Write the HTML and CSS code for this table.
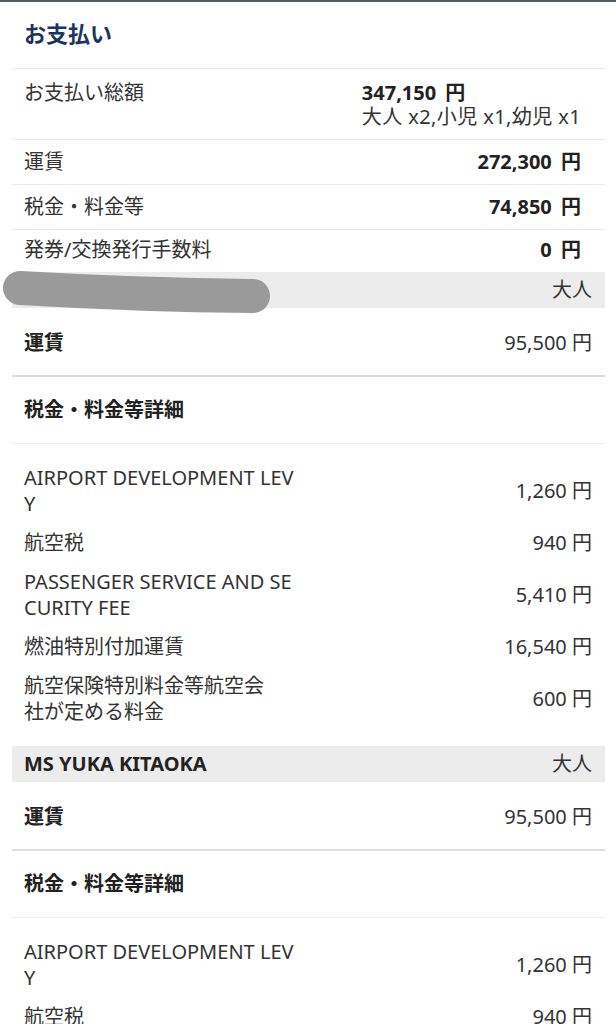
FILE: index.html
```html
<!DOCTYPE html>
<html lang="ja">
<head>
    <meta charset="UTF-8">
    <meta name="viewport" content="width=device-width, initial-scale=1.0">
    <title>お支払い</title>
    <link rel="stylesheet" href="styles.css">
</head>
<body>
    <div class="topbar"></div>
    <div class="page">
        <h2 class="title">お支払い</h2>

        <div class="summary">
            <div class="sum-row total">
                <span class="label">お支払い総額</span>
                <div class="value">
                    <div class="amount">347,150 <span class="yen">円</span></div>
                    <div class="pax-count">大人 x2,小児 x1,幼児 x1</div>
                </div>
            </div>
            <div class="sum-row">
                <span class="label">運賃</span>
                <span class="amount">272,300 <span class="yen">円</span></span>
            </div>
            <div class="sum-row">
                <span class="label">税金・料金等</span>
                <span class="amount">74,850 <span class="yen">円</span></span>
            </div>
            <div class="sum-row last">
                <span class="label">発券/交換発行手数料</span>
                <span class="amount">0 <span class="yen">円</span></span>
            </div>
        </div>

        <div class="passenger">
            <div class="pax-head">
                <span class="name"></span>
                <span class="type">大人</span>
                <!-- 名前は塗りつぶし -->
                <svg class="scribble" width="280" height="46" viewBox="0 0 280 46">
                    <path d="M20 18 Q140 25 253 26" stroke="#9a9a9a" stroke-width="34" stroke-linecap="round" fill="none"/>
                </svg>
            </div>
            <div class="fare-row">
                <span class="label">運賃</span>
                <span>95,500 円</span>
            </div>
            <div class="detail-head">税金・料金等詳細</div>
            <div class="tax-list">
                <div class="tax-item">
                    <span class="tax-name">AIRPORT DEVELOPMENT LEV<br>Y</span>
                    <span>1,260 円</span>
                </div>
                <div class="tax-item">
                    <span class="tax-name">航空税</span>
                    <span>940 円</span>
                </div>
                <div class="tax-item">
                    <span class="tax-name">PASSENGER SERVICE AND SE<br>CURITY FEE</span>
                    <span>5,410 円</span>
                </div>
                <div class="tax-item">
                    <span class="tax-name">燃油特別付加運賃</span>
                    <span>16,540 円</span>
                </div>
                <div class="tax-item">
                    <span class="tax-name">航空保険特別料金等航空会<br>社が定める料金</span>
                    <span>600 円</span>
                </div>
            </div>
        </div>

        <div class="passenger">
            <div class="pax-head">
                <span class="name">MS YUKA KITAOKA</span>
                <span class="type">大人</span>
            </div>
            <div class="fare-row">
                <span class="label">運賃</span>
                <span>95,500 円</span>
            </div>
            <div class="detail-head">税金・料金等詳細</div>
            <div class="tax-list">
                <div class="tax-item">
                    <span class="tax-name">AIRPORT DEVELOPMENT LEV<br>Y</span>
                    <span>1,260 円</span>
                </div>
                <div class="tax-item">
                    <span class="tax-name">航空税</span>
                    <span>940 円</span>
                </div>
                <div class="tax-item">
                    <span class="tax-name">PASSENGER SERVICE AND SE<br>CURITY FEE</span>
                    <span>5,410 円</span>
                </div>
            </div>
        </div>
    </div>
</body>
</html>
```

FILE: styles.css
```css
body {
    margin: 0;
    padding: 0;
    font-family: "Noto Sans", "Noto Sans CJK JP", sans-serif;
    font-size: 20px;
    color: #333;
    background: #fff;
}
.topbar {
    height: 2px;
    background-color: #4d5c66;
}
.page {
    padding: 0 11px 0 12px;
}
.title {
    margin: 0;
    padding: 17px 12px 21px;
    font-size: 22px;
    line-height: 28px;
    font-weight: bold;
    color: #1d3461;
    border-bottom: 1px solid #ebebeb;
}
.sum-row {
    display: flex;
    justify-content: space-between;
    align-items: flex-start;
    padding: 10px 24px 10px 12px;
    line-height: 24px;
    border-bottom: 1px solid #ebebeb;
}
.sum-row.total {
    padding-top: 12px;
}
.sum-row.last {
    padding-top: 8px;
    border-bottom: none;
}
.sum-row .value {
    text-align: left;
}
.sum-row .amount {
    font-weight: bold;
    color: #222;
}
.sum-row .yen {
    margin-left: 4px;
}
.pax-count {
    letter-spacing: 0.4px;
}
.pax-head {
    position: relative;
    display: flex;
    justify-content: space-between;
    height: 36px;
    line-height: 36px;
    padding: 0 13px 0 12px;
    background-color: #ececec;
}
.pax-head .name {
    font-weight: bold;
    color: #222;
}
.scribble {
    position: absolute;
    left: -12px;
    top: -2px;
}
.fare-row {
    display: flex;
    justify-content: space-between;
    padding: 23px 13px 20px 12px;
    line-height: 24px;
    border-bottom: 2px solid #dedede;
}
.fare-row .label,
.detail-head {
    font-weight: bold;
    color: #222;
}
.detail-head {
    padding: 21px 12px;
    line-height: 24px;
    border-bottom: 1px solid #ededed;
}
.tax-list {
    display: flex;
    flex-direction: column;
    gap: 13px;
    padding: 21px 13px 21px 12px;
}
.tax-item {
    display: flex;
    justify-content: space-between;
    align-items: center;
    line-height: 26px;
}
```
